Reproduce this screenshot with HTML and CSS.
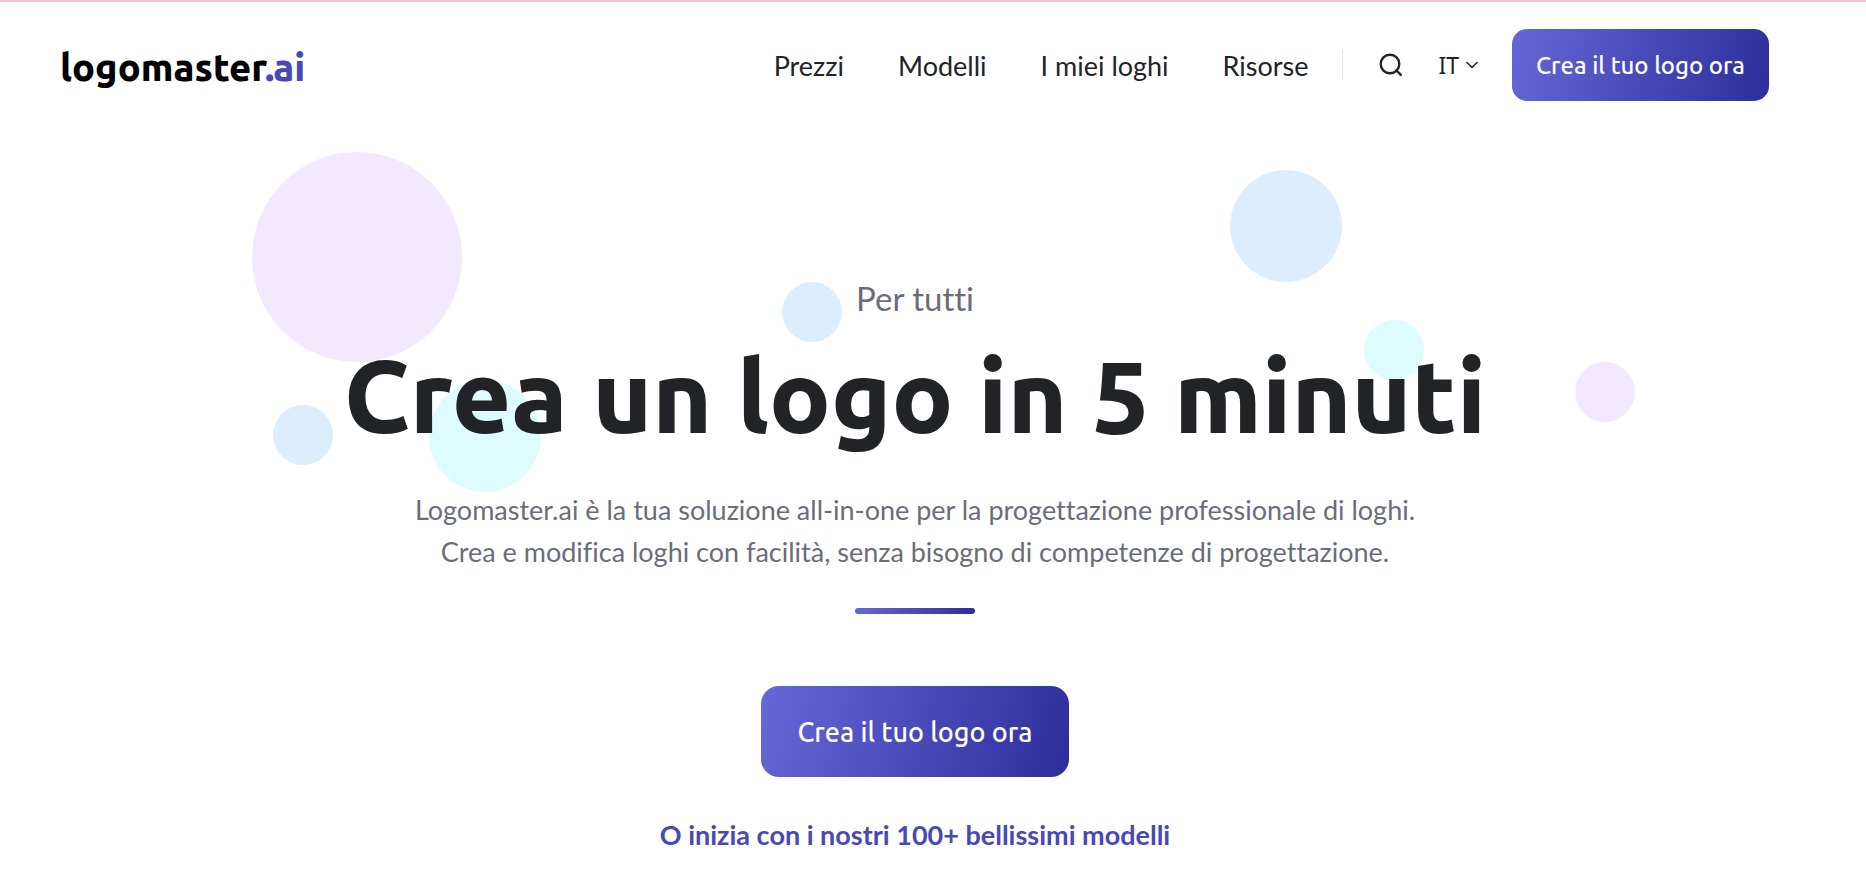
FILE: index.html
```html
<!DOCTYPE html>
<html lang="it">

<head>
    <meta charset="UTF-8">
    <meta name="viewport" content="width=device-width, initial-scale=1.0">
    <title>Logomaster.ai</title>
    <link rel="stylesheet" href="styles.css">
</head>

<body>
    <header class="header">
        <a href="#" class="logo">logomaster<span>.ai</span></a>

        <nav class="nav">
            <a href="#">Prezzi</a>
            <a href="#">Modelli</a>
            <a href="#">I miei loghi</a>
            <a href="#">Risorse</a>
        </nav>

        <div class="tools">
            <button type="button" class="icon-btn" aria-label="Cerca">
                <svg width="24" height="24" viewBox="0 0 24 24" fill="none" stroke="currentColor" stroke-width="2.4" stroke-linecap="round">
                    <circle cx="11" cy="11" r="9.3" />
                    <path d="M17.5 17.5L21.8 21.8" />
                </svg>
            </button>
            <button type="button" class="lang-btn">
                IT
                <svg width="12" height="8" viewBox="0 0 12 8" fill="none" stroke="currentColor" stroke-width="1.5" stroke-linecap="round" stroke-linejoin="round">
                    <path d="M1 1.5L6 6.5L11 1.5" />
                </svg>
            </button>
        </div>

        <button type="button" class="btn">Crea il tuo logo ora</button>
    </header>

    <main class="hero">
        <div class="bubbles" aria-hidden="true">
            <span class="bubble large purple b1"></span>
            <span class="bubble small blue b2"></span>
            <span class="bubble medium cyan b3"></span>
            <span class="bubble small blue b4"></span>
            <span class="bubble medium blue b5"></span>
            <span class="bubble small cyan b6"></span>
            <span class="bubble small purple b7"></span>
        </div>

        <p class="eyebrow">Per tutti</p>
        <h1>Crea un logo in 5 minuti</h1>
        <p class="intro">Logomaster.ai è la tua soluzione all-in-one per la progettazione professionale di loghi.<br>Crea e modifica loghi con facilità, senza bisogno di competenze di progettazione.</p>
        <div class="divider"></div>
        <button type="button" class="btn btn-large">Crea il tuo logo ora</button>
        <a href="#" class="templates-link">O inizia con i nostri 100+ bellissimi modelli</a>
    </main>
</body>

</html>
```
FILE: styles.css
```css
:root {
    --primary: #474ab6;
    --text: #212327;
    --muted: #6a6d78;
    --gradient: linear-gradient(105deg, #6568d6, #2b2e9b);
    --heading-font: Ubuntu, "Noto Sans", sans-serif;
}

* {
    margin: 0;
    padding: 0;
    box-sizing: border-box;
}

body {
    background-color: white;
    color: var(--text);
    font-family: Lato, sans-serif;
    font-variant-ligatures: none;
    border-top: 2px solid #efc9d1;
    padding-right: 36px;
}

a {
    color: inherit;
    text-decoration: none;
}

button {
    border: none;
    background: none;
    color: inherit;
    cursor: pointer;
}

.header {
    display: flex;
    align-items: center;
    height: 126px;
    padding: 0 61px 0 60px;
}

.logo {
    margin-right: auto;
    padding-top: 4px;
    color: black;
    font-family: var(--heading-font);
    font-size: 38px;
    font-weight: 800;
}

.logo span {
    color: var(--primary);
}

.nav {
    display: flex;
    gap: 54px;
    padding-top: 2px;
    font-size: 27px;
    line-height: 42px;
}

.tools {
    display: flex;
    align-items: center;
    gap: 36px;
    height: 30px;
    margin: 0 34px 0 33px;
    padding-left: 36px;
    border-left: 1px solid #dfe0e8;
}

.icon-btn {
    display: flex;
}

.lang-btn {
    display: flex;
    align-items: center;
    gap: 7px;
    font-family: "Noto Sans", sans-serif;
    font-size: 23px;
}

.btn {
    height: 72px;
    padding: 0 24px;
    border-radius: 15px;
    background: var(--gradient);
    color: white;
    font-family: var(--heading-font);
    font-size: 24px;
    font-weight: 500;
    white-space: nowrap;
}

.hero {
    position: relative;
    display: flex;
    flex-direction: column;
    align-items: center;
    padding: 144px 24px 24px;
    text-align: center;
}

.bubbles {
    position: absolute;
    inset: 0;
    z-index: -1;
}

.bubble {
    position: absolute;
    border-radius: 50%;
}

.large {
    width: 210px;
    height: 210px;
}

.medium {
    width: 112px;
    height: 112px;
}

.small {
    width: 60px;
    height: 60px;
}

.purple {
    background-color: #f2e9fe;
}

.blue {
    background-color: #dceefe;
}

.cyan {
    background-color: #defcfe;
}

.b1 {
    top: 24px;
    left: calc(50% - 663px);
}

.b2 {
    top: 277px;
    left: calc(50% - 642px);
}

.b3 {
    top: 252px;
    left: calc(50% - 486px);
}

.b4 {
    top: 154px;
    left: calc(50% - 133px);
}

.b5 {
    top: 42px;
    left: calc(50% + 315px);
}

.b6 {
    top: 192px;
    left: calc(50% + 449px);
}

.b7 {
    top: 234px;
    left: calc(50% + 660px);
}

.eyebrow {
    color: var(--muted);
    font-size: 33px;
    line-height: 52px;
}

h1 {
    margin-top: 8px;
    font-family: var(--heading-font);
    font-size: 102px;
    font-weight: 800;
    line-height: 126px;
}

.intro {
    margin-top: 31px;
    color: var(--muted);
    font-size: 27px;
    line-height: 42px;
}

.divider {
    width: 120px;
    height: 6px;
    margin: 35px 0 72px;
    border-radius: 3px;
    background: var(--gradient);
}

.btn-large {
    height: 91px;
    padding: 0 36px;
    border-radius: 18px;
    font-size: 27px;
}

.templates-link {
    margin-top: 37px;
    color: var(--primary);
    font-size: 27px;
    font-weight: 700;
    line-height: 42px;
}
```
